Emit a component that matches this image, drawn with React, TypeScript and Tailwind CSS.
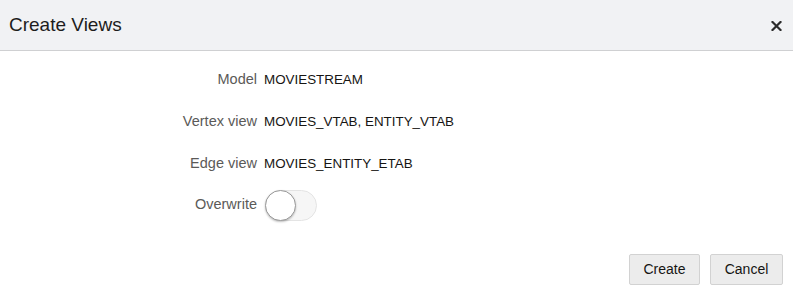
import React from "react";

export default function App() {
  const rows = [
    { label: "Model", value: "MOVIESTREAM" },
    { label: "Vertex view", value: "MOVIES_VTAB, ENTITY_VTAB" },
    { label: "Edge view", value: "MOVIES_ENTITY_ETAB" },
  ];
  return (
    <div
      className="w-[793px] h-[302px] bg-white flex flex-col text-[#161513]"
      style={{ fontFamily: "'Liberation Sans', Arial, sans-serif" }}
    >
      <div className="h-[51px] bg-[#f1f2f4] border-b border-[#cfd0d2] flex items-center justify-between pl-[9px] pr-[11px] shrink-0">
        <span className="text-[19px] text-[#1d1d1d]">Create Views</span>
        <svg width="11" height="10" viewBox="0 0 11 10" className="mt-[2px]">
          <path d="M1.5 1 L9.5 9 M9.5 1 L1.5 9" stroke="#2b2b2b" strokeWidth="2.2" strokeLinecap="square" />
        </svg>
      </div>
      <div className="flex flex-col pt-[18px]">
        {rows.map((r) => (
          <div key={r.label} className="flex items-center h-[22px] mb-[20px]">
            <span className="w-[257px] text-right text-[14.5px] text-[#5b5a58]">{r.label}</span>
            <span className="ml-[7px] text-[13.4px] text-[#161513]">{r.value}</span>
          </div>
        ))}
        <div className="flex items-center h-[32px] -mt-[6px]">
          <span className="w-[257px] text-right text-[14.5px] text-[#5b5a58]">Overwrite</span>
          <div className="ml-[8px] relative w-[52px] h-[31px] rounded-full bg-[#f6f6f6] border border-[#e4e4e4]">
            <div className="absolute -left-[1px] -top-[1px] w-[31px] h-[31px] rounded-full bg-white border border-[#9a9a9a] shadow-[0_1px_2px_rgba(0,0,0,0.25)]" />
          </div>
        </div>
      </div>
      <div className="flex justify-end gap-[10px] pr-[10px] mt-[33px]">
        <button className="w-[71px] h-[31px] bg-[#ececec] border border-[#d2d2d2] rounded-[2px] text-[14px] text-[#161513]">
          Create
        </button>
        <button className="w-[73px] h-[31px] bg-[#ececec] border border-[#d2d2d2] rounded-[2px] text-[14px] text-[#161513]">
          Cancel
        </button>
      </div>
    </div>
  );
}
